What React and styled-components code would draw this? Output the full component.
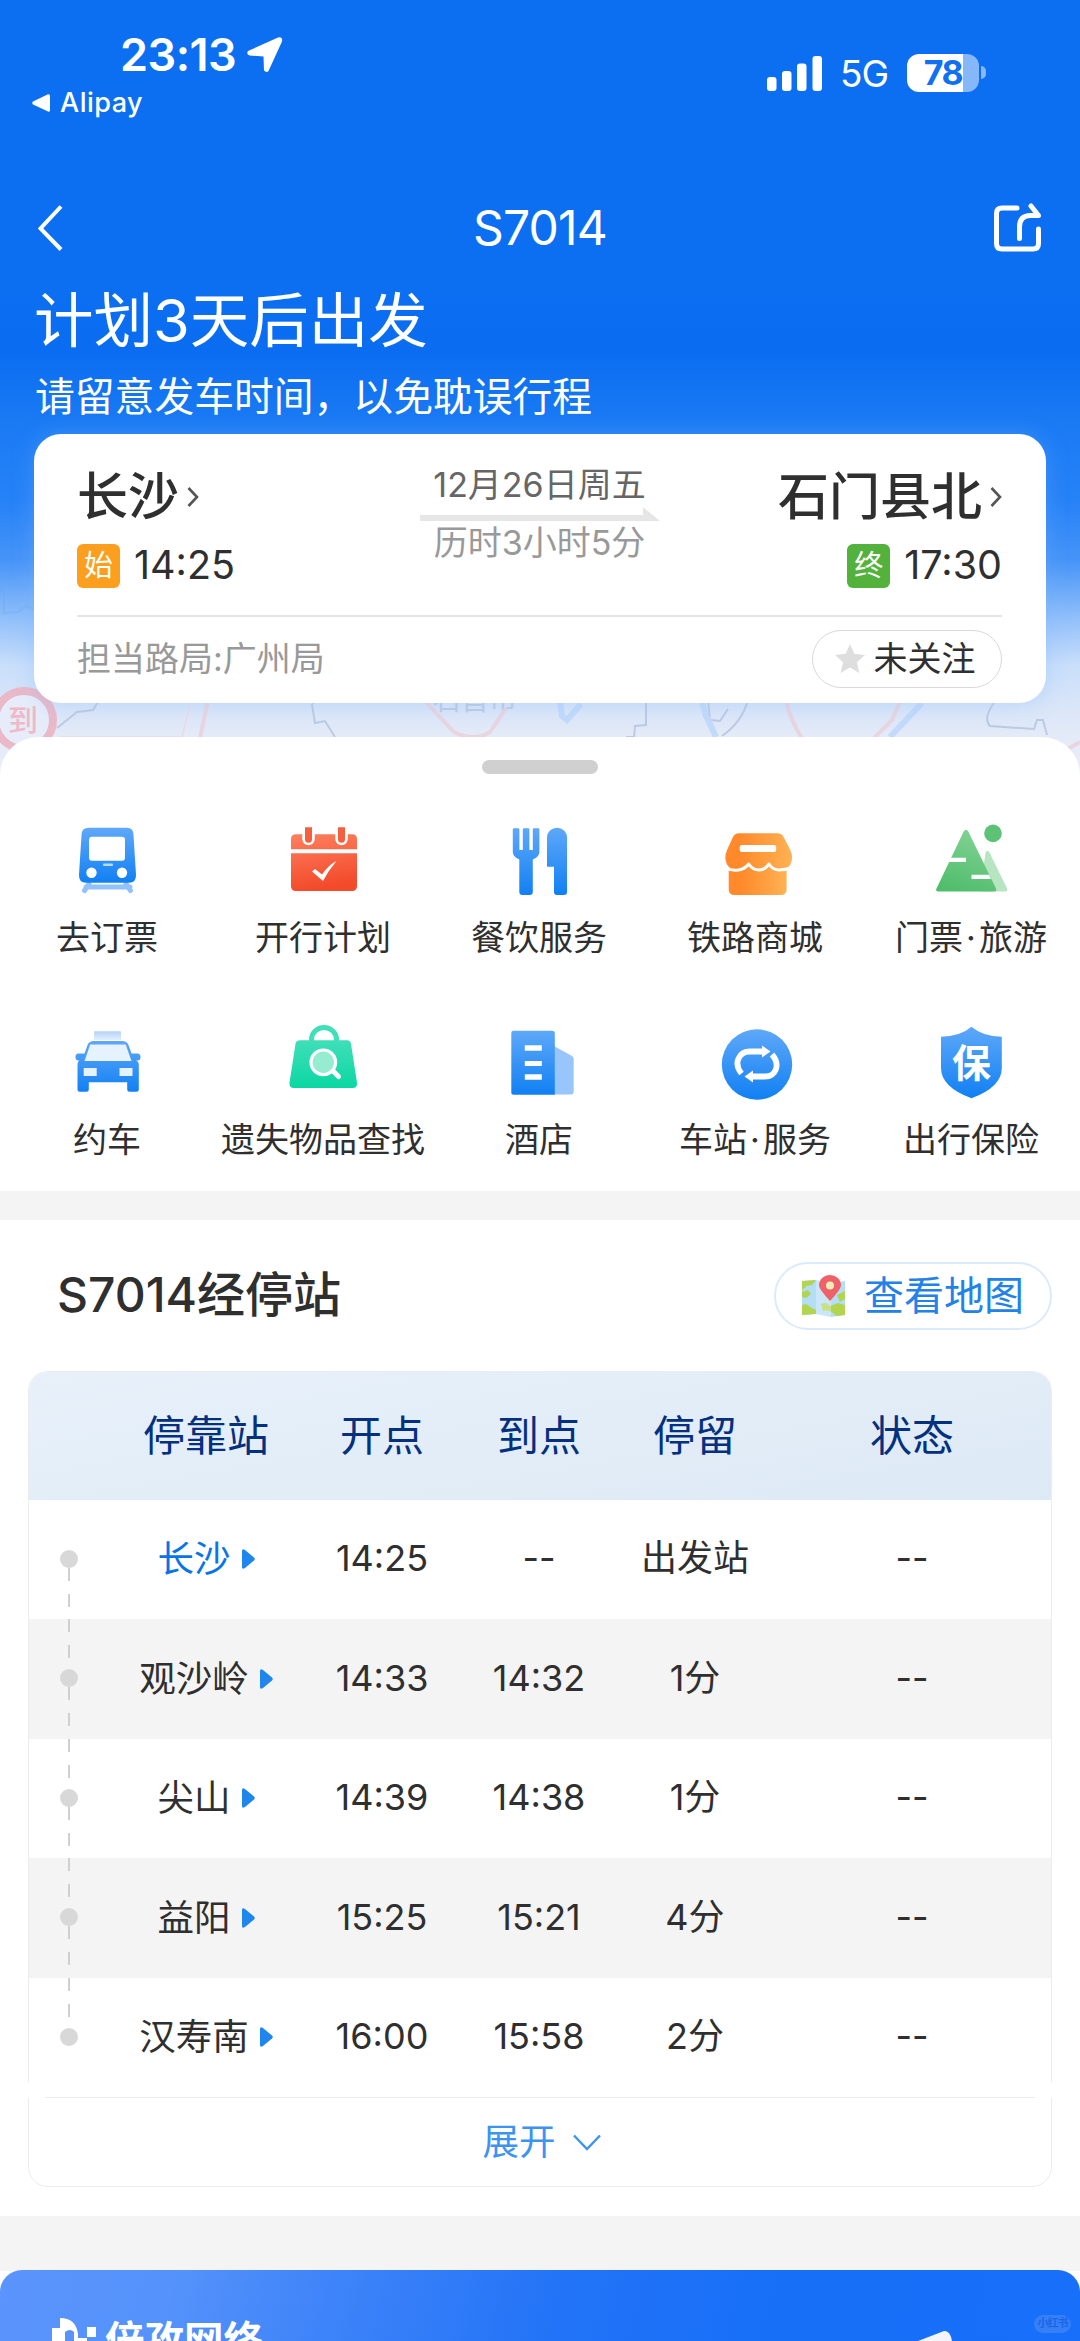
import React from 'react'
import styled, { createGlobalStyle } from 'styled-components'

const GlobalStyle = createGlobalStyle`
  body {
    margin: 0;
    background: #ffffff;
    font-family: Inter, 'Noto Sans CJK SC', sans-serif;
    line-height: 1.1;
    color: #2f2f2f;
  }
`

const Page = styled.div`
  width: 1080px;
  height: 2341px;
  overflow: hidden;
  background: #ffffff;
`

// ---- header ----

const Hero = styled.header`
  position: relative;
  height: 785px;
  background: linear-gradient(
    180deg,
    #0c6ff2 0,
    #0c6ff2 290px,
    #0a6df1 350px,
    #1a7af4 420px,
    #2682f7 500px,
    #4694f8 560px,
    #8dbdfa 615px,
    #c9dffb 665px,
    #dbe6f8 710px,
    #e4ebf8 737px,
    #ecedf8 785px
  );
`

const MapLayer = styled.svg`
  position: absolute;
  left: 0;
  top: 560px;
`

const StatusBar = styled.div`
  display: flex;
  justify-content: space-between;
  height: 170px;
  padding: 0 94px 0 32px;
  color: #ffffff;
`

const StatusLeft = styled.div`
  padding-top: 31px;
`

const Clock = styled.div`
  display: flex;
  align-items: center;
  gap: 11px;
  height: 47px;
  padding-left: 88px;
  font-size: 45px;
  font-weight: 600;
  letter-spacing: -0.5px;
`

const BackToApp = styled.div`
  display: flex;
  align-items: center;
  gap: 9px;
  height: 32px;
  margin-top: 9px;
  font-size: 27px;
  font-weight: 500;
  letter-spacing: 0.5px;
`

const StatusRight = styled.div`
  display: flex;
  align-items: center;
  height: 145px;
`

const Network = styled.span`
  margin: 4px 19px 0 17px;
  font-size: 37px;
  letter-spacing: -1px;
`

const Battery = styled.div`
  display: flex;
  align-items: center;
  justify-content: center;
  width: 72px;
  height: 38px;
  border-radius: 12px;
  background: linear-gradient(90deg, #ffffff 56px, #86b7f8 56px);
  color: #0f70f1;
  font-size: 34px;
  font-weight: 700;
  letter-spacing: -1.4px;
`

const BatteryCap = styled.span`
  width: 5px;
  height: 13px;
  margin-left: 2px;
  border-radius: 0 6px 6px 0;
  background: #86b7f8;
`

const NavBar = styled.nav`
  display: flex;
  align-items: center;
  justify-content: space-between;
  height: 116px;
  padding: 0 38px;
`

const NavSide = styled.div`
  display: flex;
  width: 49px;
`

const NavTitle = styled.h1`
  margin: 0;
  color: #ffffff;
  font-size: 48px;
  font-weight: 400;
  letter-spacing: -0.8px;
`

const Headline = styled.h2`
  height: 68px;
  margin: 0;
  padding-left: 34px;
  color: #ffffff;
  font-size: 59.5px;
  line-height: 68px;
  font-weight: 400;
`

const Hint = styled.p`
  height: 42px;
  margin: 22px 0 16px;
  padding-left: 35px;
  color: #ffffff;
  font-size: 39.8px;
  line-height: 42px;
`

// ---- trip card ----

const TripCard = styled.section`
  position: relative;
  box-sizing: border-box;
  height: 269px;
  margin: 0 34px;
  padding: 33px 44px 0 43px;
  border-radius: 27px;
  background: #ffffff;
  box-shadow: 0 0 22px rgba(120, 180, 255, 0.35);
`

const TripRow = styled.div`
  display: grid;
  grid-template-columns: 1fr 240px 1fr;
  height: 148px;
  border-bottom: 2px solid #e6e6e6;
`

const TripEnd = styled.div`
  display: flex;
  flex-direction: column;
  align-items: ${props => props.$right ? 'flex-end' : 'flex-start'};
  padding-top: 5px;
`

const TripStation = styled.div`
  display: flex;
  align-items: center;
  gap: 8px;
  height: 50px;
  font-size: 51px;
  line-height: 50px;
  font-weight: 500;
  white-space: nowrap;
`

const TripTime = styled.div`
  display: flex;
  align-items: center;
  gap: 14px;
  height: 44px;
  margin-top: 22px;
  font-size: 39.5px;
`

const EndBadge = styled.span`
  width: 43px;
  height: 44px;
  border-radius: 6px;
  background: ${props => props.$color};
  color: #ffffff;
  font-size: 29px;
  line-height: 43px;
  text-align: center;
`

const TripMiddle = styled.div`
  display: flex;
  flex-direction: column;
  align-items: center;
  gap: 4px;
`

const TripNote = styled.span`
  height: 36px;
  color: ${props => props.$light ? '#999999' : '#666666'};
  font-size: 34px;
  line-height: 36px;
  white-space: nowrap;
`

const TripFooter = styled.div`
  display: flex;
  align-items: center;
  justify-content: space-between;
  height: 83px;
  color: #999999;
  font-size: 34px;
`

const FollowButton = styled.button`
  display: flex;
  align-items: center;
  justify-content: center;
  gap: 9px;
  box-sizing: border-box;
  width: 190px;
  height: 58px;
  padding: 0 4px 0 0;
  border: 1px solid #d9d9d9;
  border-radius: 29px;
  background: #ffffff;
  color: #2f2f2f;
  font: inherit;
`

// ---- services ----

const Sheet = styled.section`
  position: relative;
  box-sizing: border-box;
  height: 454px;
  margin-top: -48px;
  padding-top: 23px;
  border-radius: 38px 38px 0 0;
  background: #ffffff;
`

const Handle = styled.div`
  width: 116px;
  height: 14px;
  margin: 0 auto 51px;
  border-radius: 7px;
  background: #d0d0d0;
`

const ServiceGrid = styled.div`
  display: grid;
  grid-template-columns: repeat(5, 216px);
  grid-auto-rows: 202px;
`

const Service = styled.div`
  display: flex;
  flex-direction: column;
  align-items: center;
  font-size: 34px;
  line-height: 40px;
  white-space: nowrap;

  svg {
    overflow: visible;
    margin-bottom: 21px;
  }
`

const ServiceLabel = styled.span`
  padding-right: 2px;
`

const Dot = styled.span`
  display: inline-block;
  width: 16px;
  text-align: center;
`

const Gap = styled.div`
  height: ${props => props.$height}px;
  background: #f4f4f4;
`

// ---- stop table ----

const StopsHeader = styled.div`
  display: flex;
  align-items: center;
  justify-content: space-between;
  height: 151px;
  padding: 0 28px 0 57px;
`

const StopsTitle = styled.h3`
  margin: 0;
  font-size: 48px;
  font-weight: 500;
`

const MapButton = styled.button`
  display: flex;
  align-items: center;
  gap: 18px;
  box-sizing: border-box;
  width: 278px;
  height: 68px;
  padding: 0 0 0 25px;
  border: 2px solid #dbebfc;
  border-radius: 34px;
  background: #ffffff;
  color: #2382e8;
  font: inherit;
  font-size: 40px;
`

const StopsTable = styled.div`
  box-sizing: border-box;
  margin: 0 28px;
  height: 726px;
  border: 1px solid #ececee;
  border-bottom: 0;
  border-radius: 20px 20px 0 0;
  overflow: hidden;
`

const Row = styled.div`
  display: grid;
  grid-template-columns: 80px 194px 158px 156px 156px 1fr;
  align-items: center;
  justify-items: center;
  height: 119.5px;
  background: ${props => props.$shaded ? '#f4f4f4' : '#ffffff'};
  font-size: 36px;
`

const HeadRow = styled(Row)`
  height: 127.5px;
  background: linear-gradient(170deg, #e8f1fa, #dde9f5);
  color: #03307f;
  font-size: 42px;
`

const Track = styled.div`
  display: flex;
  flex-direction: column;
  align-items: center;
  height: 100%;
`

const Dashes = styled.div`
  width: 2px;
  height: ${props => props.$height}px;
  background: ${props => props.$hidden
    ? 'none'
    : 'repeating-linear-gradient(180deg, #d0d0d0 0 13px, transparent 13px 26px)'};
`

const TrackDot = styled.div`
  width: 18px;
  height: 18px;
  border-radius: 50%;
  background: #d8d8d8;
`

const StopName = styled.div`
  display: flex;
  align-items: center;
  gap: 11px;
  color: ${props => props.$active ? '#0a74e6' : 'inherit'};
  font-size: 36.5px;
`

// blank patches over the border ends where the table meets the expand bar
const Seam = styled.div`
  position: relative;
  height: 0;
  margin: 0 27px;

  &::before,
  &::after {
    content: '';
    position: absolute;
    z-index: 1;
    top: -15px;
    width: 18px;
    height: 16px;
    background: #ffffff;
  }

  &::before {
    left: 0;
  }

  &::after {
    right: 0;
  }
`

const Expand = styled.div`
  display: flex;
  align-items: center;
  justify-content: center;
  gap: 17px;
  box-sizing: border-box;
  height: 90px;
  margin: 0 28px 29px;
  padding-left: 3px;
  border: 1px solid #ececee;
  border-radius: 0 0 20px 20px;
  color: #3c93f0;
  font-size: 36.5px;
`

// ---- ad banner ----

const BannerWrap = styled.div`
  background: linear-gradient(180deg, #f4f4f4 1px, #ffffff 1px);
`

const Banner = styled.div`
  position: relative;
  display: flex;
  align-items: flex-start;
  height: 71px;
  overflow: hidden;
  border-radius: 22px 22px 0 0;
  background: linear-gradient(105deg, #5a94fc 0, #5592fb 16%, #3f84f9 30%, #2273f7 52%, #176ff8 72%, #186ffa 100%);
`

const BannerBrand = styled.div`
  display: flex;
  gap: 9px;
  padding: 48px 0 0 52px;
  color: #ffffff;
  font-size: 39.5px;
  line-height: 46px;
  font-weight: 700;
`

const Watermark = styled.span`
  position: absolute;
  right: 9px;
  top: 45px;
  width: 37px;
  height: 18px;
  border-radius: 9px;
  background: #3580f6;
  color: #1b66ea;
  font-size: 11px;
  line-height: 17px;
  font-weight: 700;
  text-align: center;
  letter-spacing: -1px;
`

const BannerShape = styled.svg`
  position: absolute;
  left: 900px;
  top: 58px;
`

// ---- icons ----

const HiddenSvg = styled.svg`
  position: absolute;
`

const Gradients = () => (
  <HiddenSvg width="0" height="0">
    <defs>
      <linearGradient id="blue" x1="0" y1="0" x2="0" y2="1">
        <stop offset="0" stopColor="#5ea8f9" />
        <stop offset="1" stopColor="#1180f3" />
      </linearGradient>
      <linearGradient id="red" x1="0" y1="0" x2="0.2" y2="1">
        <stop offset="0" stopColor="#fd8060" />
        <stop offset="1" stopColor="#f34a2a" />
      </linearGradient>
      <linearGradient id="orange" x1="0" y1="0" x2="1" y2="0">
        <stop offset="0.2" stopColor="#ff892b" />
        <stop offset="1" stopColor="#ffb254" />
      </linearGradient>
      <linearGradient id="green" x1="0.6" y1="0" x2="0.3" y2="1">
        <stop offset="0" stopColor="#81d292" />
        <stop offset="1" stopColor="#50bd6c" />
      </linearGradient>
      <linearGradient id="mint" x1="0" y1="0" x2="0" y2="1">
        <stop offset="0" stopColor="#3fdfb8" />
        <stop offset="1" stopColor="#0bd7a3" />
      </linearGradient>
      <linearGradient id="sign" x1="0" y1="0" x2="0" y2="1">
        <stop offset="0" stopColor="#b3d2fb" />
        <stop offset="1" stopColor="#e6f0fe" />
      </linearGradient>
    </defs>
  </HiddenSvg>
)

const TrainIcon = () => (
  <svg width="72" height="72">
    <path d="M14 62h44M17 59l-4.500 6.500M54 59l4.500 6.500" stroke="#93c1fb" strokeWidth="5" strokeLinecap="round" fill="none" />
    <path d="M17 2.700h38q6 0 6.400 6l2.600 41q.3 8-7 8H14q-7.300 0-7-8l2.600-41q.4-6 7.400-6z" fill="url(#blue)" />
    <rect x="17" y="11.700" width="36" height="24" rx="3" fill="#fff" />
    <rect x="31" y="38.500" width="10" height="2.600" rx="1" fill="#b9d9fd" />
    <circle cx="19.500" cy="47.700" r="5.200" fill="#fff" />
    <circle cx="50" cy="47.700" r="5.200" fill="#fff" />
  </svg>
)

const CalendarIcon = () => (
  <svg width="72" height="72">
    <path d="M3 24.300v-10q0-5 5-5h56q5 0 5 5v10zM3 28.300h66V61q0 5-5 5H8q-5 0-5-5z" fill="url(#red)" />
    <path d="M20.500 2v12M53.500 2v12" stroke="#fff" strokeWidth="12.500" strokeLinecap="round" />
    <path d="M17 2.300h7v12a3.500 3.500 0 0 1-7 0zM50 2.300h7v12a3.500 3.500 0 0 1-7 0z" fill="#f4603f" />
    <path d="M24 46.500l3-2.500 7 5.500q6-9 14.500-13.500Q40 46 35 56z" fill="#fff" />
  </svg>
)

const FoodIcon = () => (
  <svg width="72" height="72">
    <path d="M8.800 4.500q0-1.200 1.200-1.200h4.200q1.200 0 1.200 1.200V25h3.400V4.500q0-1.200 1.200-1.200h4.200q1.200 0 1.200 1.200V25h3.400V4.500q0-1.200 1.200-1.200h4.200q1.200 0 1.200 1.200V27q0 5-6.600 7.500V67q0 3-3 3h-7.500q-3 0-3-3V34.500Q8.800 32 8.800 27z" fill="url(#blue)" />
    <path d="M43 12.500a10 9.800 0 0 1 20 0V67q0 3-3 3h-7q-3 0-3-3V41.700h-7z" fill="url(#blue)" />
  </svg>
)

const ShopIcon = () => (
  <svg width="72" height="72">
    <path d="M19 8.300h38.500q4.500 0 6.200 4l6.500 12.500q3.800 8-.2 15.500-4 5-12.500 5l-19 1-19.500-1Q10 45 7 39.500q-3.500-7 .3-15l5.500-12.200q2-4 6.200-4z" fill="url(#orange)" />
    <path d="M8.700 43H66.600V64q0 6-6 6h-46q-5.900 0-5.900-6z" fill="url(#orange)" />
    <path d="M5 42.500q7 3.800 13.500 2.500 6.500-1 10.200-6 4 6 10.200 6t10-6q4 6 10 6 6.500 0 13-2.500" stroke="#fff" strokeWidth="3" strokeLinejoin="round" fill="none" />
    <rect x="19.700" y="20" width="36.500" height="7" rx="2" fill="#fff" />
  </svg>
)

const MountainIcon = () => (
  <svg width="72" height="72">
    <path d="M49.500 27.500q2-3.500 4 0l17.600 36q1 3-2 3H44z" fill="#b7e4c1" />
    <path d="M27.700 6.500q2.300-3.500 4.600 0L60 63.500q1 3-2 3H2.500q-3.500 0-2-3z" fill="url(#green)" />
    <circle cx="57" cy="8.400" r="8.800" fill="#5dc276" />
    <path d="M14.500 32.700H30v4.300H12.500zM35.500 49.700H53l2 4.300H35.500z" fill="#fff" />
  </svg>
)

const TaxiIcon = () => (
  <svg width="72" height="72">
    <rect x="22" y="4.300" width="27" height="9" rx="1" fill="url(#sign)" />
    <path d="M22 14h28q5 0 6.500 4l3 8.500h6q3 0 3 3.500t-3 3.500h-1.500q2.800 1 2.800 4v25q0 2.300-2.300 2.300h-7q-2.300 0-2.300-2.300v-7.200H16.800v7.200q0 2.300-2.300 2.300h-6.700q-2.300 0-2.300-2.300v-25q0-3 1.800-4h-.8q-3 0-3-3.500t3-3.500h6l3-8.500Q17 14 22 14z" fill="url(#blue)" />
    <path d="M18.200 17.500h35.500L59.500 34H12.500z" fill="#e6f2fe" />
    <path d="M11.700 41h13v8h-13zM47.500 41h13v8h-13z" fill="#e6f2fe" />
  </svg>
)

const BagIcon = () => (
  <svg width="72" height="72">
    <path d="M23.500 16v-3.500a12.400 12 0 0 1 25 0V16" fill="none" stroke="#3fdfb8" strokeWidth="5" />
    <path d="M12 13.300h47q3.500 0 4 3.500l6 39q.5 5.200-4.500 5.200H6q-5 0-4.500-5.200l6-39q.5-3.500 4.500-3.500z" fill="url(#mint)" />
    <path d="M45 44l5.500 5.500" stroke="#fff" strokeWidth="5" strokeLinecap="round" />
    <circle cx="35.300" cy="35.300" r="12.300" fill="#96ecd0" stroke="#fff" strokeWidth="3.200" />
  </svg>
)

const HotelIcon = () => (
  <svg width="72" height="72">
    <path d="M49 18.500l19 10.500q1.700 1 1.700 3v32.500q0 3-3 3H49z" fill="#98c5fb" />
    <path d="M9.500 3.700H48q2.800 0 2.800 2.800v61.200H9.500q-2.200 0-2.200-2.200V6q0-2.300 2.200-2.300z" fill="url(#blue)" />
    <path d="M20.800 18.300h17v5.400h-17zM20.800 34h17v5h-17zM20.800 47.300h17v5.400h-17z" fill="#fff" />
  </svg>
)

const ServiceIcon = () => (
  <svg width="72" height="72">
    <circle cx="37" cy="37.500" r="35.200" fill="url(#blue)" />
    <path d="M21.500 46.500C13 36 19 24.500 30 24.500h14M52 27.500C61 38 55.500 49.500 45 49.500H31" fill="none" stroke="#fff" strokeWidth="5.800" />
    <path d="M42 18.500l8.500 6-8.500 6zM33 43.500l-8.500 6 8.500 6z" fill="#fff" />
  </svg>
)

const ShieldText = styled.text`
  fill: #ffffff;
  font-size: 39px;
  font-weight: 700;
  text-anchor: middle;
`

const InsuranceIcon = () => (
  <svg width="72" height="72">
    <path d="M35.500-.3Q47 9.500 65.800 9.700V41q0 19-30.300 30.300Q5 60 5 41V9.700Q24 9.500 35.500-.3z" fill="url(#blue)" />
    <ShieldText x="35.500" y="50">保</ShieldText>
  </svg>
)

const MapIcon = () => (
  <svg width="45" height="42">
    <path d="M1 6l14-1 15 3 14-2v34l-14 2-15-3-14 1z" fill="#b4ddf6" />
    <path d="M1 6l14-1-4 5-5 1-5 4zM1 17l6-2 3 4-5 4-4-1zM1 30q6-2 8 2l6 3v4L1 40zM20 29q6-3 9 2l8-3 7 2v10l-9 1q-6-7-13-5zM36 20l8-4v8l-5 3z" fill="#b2d44f" />
    <path d="M15 5v34l15 3V8z" fill="#ffffff" opacity="0.3" />
    <path d="M29 26Q18 14 18 10.500a11 10.500 0 0 1 22 0Q40 14 29 26z" fill="#ef6068" />
    <circle cx="29" cy="10.500" r="4" fill="#e8efb8" />
  </svg>
)

const services = [
  { icon: TrainIcon, label: ['去订票'] },
  { icon: CalendarIcon, label: ['开行计划'] },
  { icon: FoodIcon, label: ['餐饮服务'] },
  { icon: ShopIcon, label: ['铁路商城'] },
  { icon: MountainIcon, label: ['门票', '旅游'] },
  { icon: TaxiIcon, label: ['约车'] },
  { icon: BagIcon, label: ['遗失物品查找'] },
  { icon: HotelIcon, label: ['酒店'] },
  { icon: ServiceIcon, label: ['车站', '服务'] },
  { icon: InsuranceIcon, label: ['出行保险'] },
]

const stops = [
  { name: '长沙', depart: '14:25', arrive: '--', stay: '出发站' },
  { name: '观沙岭', depart: '14:33', arrive: '14:32', stay: '1分' },
  { name: '尖山', depart: '14:39', arrive: '14:38', stay: '1分' },
  { name: '益阳', depart: '15:25', arrive: '15:21', stay: '4分' },
  { name: '汉寿南', depart: '16:00', arrive: '15:58', stay: '2分' },
]

const Chevron = () => (
  <svg width="12" height="20">
    <path d="M1.500 1l8.500 9-8.500 9" fill="none" stroke="#555" strokeWidth="2.600" />
  </svg>
)

const MapText = styled.text`
  fill: #bfcce3;
  font-size: 28px;
`

const StampText = styled.text`
  fill: #efb9c6;
  font-size: 30px;
  font-weight: 500;
  text-anchor: middle;
`

const MapBackdrop = () => (
  <MapLayer width="1080" height="225">
    <circle cx="24" cy="160" r="29" fill="#e6ecfa" stroke="#eab9c8" strokeWidth="8" />
    <StampText x="23" y="171">到</StampText>
    <MapText x="433" y="150">石首市</MapText>
    <g fill="none" strokeWidth="2">
      <path d="M0 30l4 3v20l14-1 8-6 8 3" stroke="#6aa5ee" opacity="0.3" />
      <path d="M57 168l20-16 16-2 5-8M320 130l-8 15 3 18 10-2 10 16M626 177h8l1-11 11-1v-26M708 140l2 20 10 1 8-12M748 140q-6 22-26 36M996 140q-14 18-6 26l44 3 3-9h6l4 15" stroke="#bccbe2" />
      <path d="M208 140l-8 38" stroke="#e9d5e0" strokeWidth="4" />
      <path d="M60 177h122l8-32" stroke="#e8dde8" />
      <path d="M424 140l30 32q20 10 36 0l16-24M786 140q4 20 16 38M900 142l-8 18-18 18M1066 190l14-8" stroke="#e8d5df" strokeWidth="4" />
      <path d="M560 142l2 14 5 4 14-16M702 142l4 14 10 21M922 143l-32 34" stroke="#c3dafb" strokeWidth="6" />
    </g>
  </MapLayer>
)

const App = () => {
  return (
    <Page>
      <GlobalStyle />
      <Gradients />

      <Hero>
        <MapBackdrop />
        <StatusBar>
          <StatusLeft>
            <Clock>
              23:13
              <svg width="36" height="36">
                <path d="M31 .5q5-1 4 4L21.500 34q-2 2-4.500-.5l-.5-14-14-1q-3.500-1.500-1.500-4.500z" fill="#fff" />
              </svg>
            </Clock>
            <BackToApp>
              <svg width="19" height="18">
                <path d="M1 7.500L16 .3q2-.3 2 1.500v14.500q0 2-2 1.300L1 10.500q-1.500-1.500 0-3z" fill="#fff" />
              </svg>
              Alipay
            </BackToApp>
          </StatusLeft>
          <StatusRight>
            <svg width="56" height="36">
              <g fill="#fff">
                <rect x="0" y="22" width="9.500" height="14" rx="3" />
                <rect x="15" y="16" width="9.500" height="20" rx="3" />
                <rect x="30" y="8.500" width="9.500" height="27.500" rx="3" />
                <rect x="45.500" y="1" width="9.500" height="35" rx="3" />
              </g>
            </svg>
            <Network>5G</Network>
            <Battery>78</Battery>
            <BatteryCap />
          </StatusRight>
        </StatusBar>

        <NavBar>
          <NavSide>
            <svg width="25" height="46">
              <path d="M23 1.500L2.500 23.500 23 44.500" fill="none" stroke="#fff" strokeWidth="4" />
            </svg>
          </NavSide>
          <NavTitle>S7014</NavTitle>
          <NavSide>
            <svg width="49" height="50">
              <g fill="none" stroke="#fff" strokeWidth="5" strokeLinecap="round" strokeLinejoin="round">
                <path d="M24 5H9Q3.500 5 3.500 10.500v30Q3.500 46 9 46h31q5.500 0 5.500-5.500V26" />
                <path d="M26.500 35.500V24q0-11.500 11-11.500H45.500L38 3" />
              </g>
            </svg>
          </NavSide>
        </NavBar>

        <Headline>计划3天后出发</Headline>
        <Hint>请留意发车时间，以免耽误行程</Hint>

        <TripCard>
          <TripRow>
            <TripEnd>
              <TripStation>长沙<Chevron /></TripStation>
              <TripTime>
                <EndBadge $color="#fd9f1e">始</EndBadge>
                14:25
              </TripTime>
            </TripEnd>
            <TripMiddle>
              <TripNote>12月26日周五</TripNote>
              <svg width="240" height="14">
                <path d="M0 8h223V0l17 14H0z" fill="#e6e6e6" />
              </svg>
              <TripNote $light>历时3小时5分</TripNote>
            </TripMiddle>
            <TripEnd $right>
              <TripStation>石门县北<Chevron /></TripStation>
              <TripTime>
                <EndBadge $color="#53b23b">终</EndBadge>
                17:30
              </TripTime>
            </TripEnd>
          </TripRow>
          <TripFooter>
            担当路局:广州局
            <FollowButton>
              <svg width="30" height="30">
                <path d="M15 0l4.300 9.800L30 11l-8 7.200L24.300 29 15 23.400 5.700 29 8 18.200 0 11l10.700-1.200z" fill="#dedede" />
              </svg>
              未关注
            </FollowButton>
          </TripFooter>
        </TripCard>
      </Hero>

      <Sheet>
        <Handle />
        <ServiceGrid>
          {services.map(({ icon: Icon, label }) => (
            <Service key={label[0]}>
              <Icon />
              <ServiceLabel>
                {label[0]}
                {label[1] && <Dot>·</Dot>}
                {label[1]}
              </ServiceLabel>
            </Service>
          ))}
        </ServiceGrid>
      </Sheet>

      <Gap $height={29} />

      <StopsHeader>
        <StopsTitle>S7014经停站</StopsTitle>
        <MapButton>
          <MapIcon />
          查看地图
        </MapButton>
      </StopsHeader>
      <StopsTable>
        <HeadRow>
          <span />
          <span>停靠站</span>
          <span>开点</span>
          <span>到点</span>
          <span>停留</span>
          <span>状态</span>
        </HeadRow>
        {stops.map((stop, i) => (
          <Row key={stop.name} $shaded={i % 2 === 1}>
            <Track>
              <Dashes $height={50} $hidden={i === 0} />
              <TrackDot />
              <Dashes $height={51.5} $hidden={i === stops.length - 1} />
            </Track>
            <StopName $active={i === 0}>
              {stop.name}
              <svg width="13" height="20">
                <path d="M0 2q0-3 3-1l9 7.500q1.500 1.500 0 3L3 19q-3 2-3-1z" fill="#1f86ee" />
              </svg>
            </StopName>
            <span>{stop.depart}</span>
            <span>{stop.arrive}</span>
            <span>{stop.stay}</span>
            <span>--</span>
          </Row>
        ))}
      </StopsTable>
      <Seam />
      <Expand>
        展开
        <svg width="28" height="17">
          <path d="M1 1.500l13 13.500L27 1.500" fill="none" stroke="#3c93f0" strokeWidth="2.400" />
        </svg>
      </Expand>

      <Gap $height={54} />

      <BannerWrap>
        <Banner>
          <BannerBrand>
            <svg width="44" height="30">
              <path d="M8 0q16 0 18 16v4h9v10H22V14q-4-4-9 0v16H0V10h8z" fill="#fff" />
              <rect x="35" y="9" width="9" height="10" fill="#fff" />
            </svg>
            倍孜网络
          </BannerBrand>
          <BannerShape width="60" height="14">
            <path d="M18 13L44 3q6-1 8 10z" fill="#f3f5fb" />
          </BannerShape>
          <Watermark>小红书</Watermark>
        </Banner>
      </BannerWrap>
    </Page>
  )
}

export default App
